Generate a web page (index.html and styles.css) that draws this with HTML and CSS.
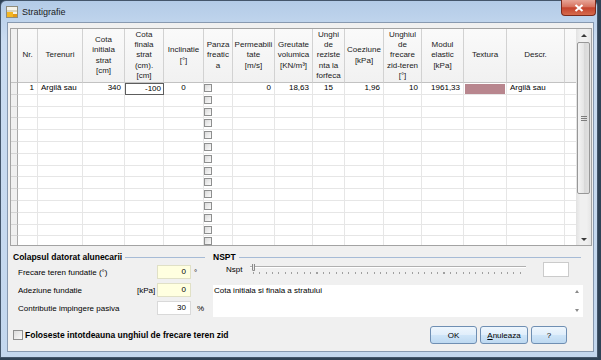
FILE: index.html
```html
<!DOCTYPE html>
<html lang="ro">
<head>
    <meta charset="UTF-8">
    <meta name="viewport" content="width=device-width, initial-scale=1.0">
    <title>Stratigrafie</title>
    <link rel="stylesheet" href="styles.css">
</head>
<body>
    <div class="window">
        <div class="titlebar">
            <svg class="app-icon" viewBox="0 0 12 12">
                <rect x="0.5" y="0.5" width="11" height="11" fill="#f6f3e8" stroke="#8f8c7c"/>
                <rect x="1" y="4" width="10" height="2" fill="#d9d3bd"/>
                <rect x="1" y="6" width="6" height="5" fill="#f3b623"/>
                <rect x="7" y="8" width="4" height="3" fill="#e49a16"/>
            </svg>
            <span class="title">Stratigrafie</span>
            <div class="close-btn">
                <svg width="10" height="8" viewBox="0 0 10 8">
                    <path d="M1.5 1 L8.5 7 M8.5 1 L1.5 7" stroke="#fff" stroke-width="2"/>
                </svg>
            </div>
        </div>

        <div class="client">
            <div class="grid-wrap">
                <div class="grid" id="grid">
                    <div class="hc corner"></div>
                    <div class="hc">Nr.</div>
                    <div class="hc">Terenuri</div>
                    <div class="hc">Cota<br>initiala<br>strat<br>[cm]</div>
                    <div class="hc">Cota<br>finala<br>strat<br>(cm).<br>[cm]</div>
                    <div class="hc">Inclinatie<br>[°]</div>
                    <div class="hc">Panza<br>freatic<br>a</div>
                    <div class="hc">Permeabili<br>tate<br>[m/s]</div>
                    <div class="hc">Greutate<br>volumica<br>[KN/m³]</div>
                    <div class="hc">Unghi<br>de<br>reziste<br>nta la<br>forfeca</div>
                    <div class="hc">Coeziune<br>[kPa]</div>
                    <div class="hc">Unghiul<br>de<br>frecare<br>zid-teren<br>[°]</div>
                    <div class="hc">Modul<br>elastic<br>[kPa]</div>
                    <div class="hc">Textura</div>
                    <div class="hc">Descr.</div>
                    <div class="hc filler"></div>

                    <div class="rh"></div>
                    <div class="c r">1</div>
                    <div class="c">Argilă sau</div>
                    <div class="c r">340</div>
                    <div class="c r sel">-100</div>
                    <div class="c m">0</div>
                    <div class="c cbcell"><span class="cb"></span></div>
                    <div class="c r">0</div>
                    <div class="c r">18,63</div>
                    <div class="c m">15</div>
                    <div class="c r">1,96</div>
                    <div class="c r">10</div>
                    <div class="c r">1961,33</div>
                    <div class="c tex"></div>
                    <div class="c">Argilă sau</div>
                    <div class="c filler"></div>
                    <!-- restul randurilor sunt adaugate din script -->
                </div>
                <div class="vscroll">
                    <div class="sb-btn"><span class="arrow-up"></span></div>
                    <div class="sb-track">
                        <div class="sb-thumb"><span class="grip"></span></div>
                    </div>
                    <div class="sb-btn"><span class="arrow-down"></span></div>
                </div>
            </div>

            <div class="panels">
                <div class="group group-left">
                    <div class="group-title">Colapsul datorat alunecarii</div>
                    <div class="fields">
                        <div class="field-row">
                            <span class="lbl">Frecare teren fundatie (°)</span>
                            <span class="pre"></span>
                            <span class="inp yellow">0</span>
                            <span class="post">°</span>
                        </div>
                        <div class="field-row">
                            <span class="lbl">Adeziune fundatie</span>
                            <span class="pre">[kPa]</span>
                            <span class="inp yellow">0</span>
                        </div>
                        <div class="field-row">
                            <span class="lbl">Contributie impingere pasiva</span>
                            <span class="pre"></span>
                            <span class="inp">30</span>
                            <span class="post pct">%</span>
                        </div>
                    </div>
                </div>

                <div class="group group-right">
                    <div class="group-title">NSPT</div>
                    <div class="nspt-row">
                        <span class="nspt-lbl">Nspt</span>
                        <div class="slider">
                            <div class="track"></div>
                            <div class="ticks"></div>
                            <div class="thumb"></div>
                        </div>
                        <span class="nspt-box"></span>
                    </div>
                    <div class="memo">
                        <div class="memo-text">Cota initiala si finala a stratului</div>
                        <div class="memo-sb">
                            <span class="arrow-up small"></span>
                            <span class="arrow-down small"></span>
                        </div>
                    </div>
                </div>
            </div>

            <div class="footer">
                <span class="chk"></span>
                <span class="chk-text">Foloseste intotdeauna unghiul de frecare teren zid</span>
                <div class="buttons">
                    <button class="btn btn-ok">OK</button>
                    <button class="btn btn-cancel"><u>A</u>nuleaza</button>
                    <button class="btn btn-help">?</button>
                </div>
            </div>
        </div>
    </div>

    <script>
        // randuri goale in grila (doar coloana "Panza freatica" are checkbox)
        const grid = document.getElementById('grid');
        for (let i = 0; i < 13; i++) {
            for (let c = 0; c < 16; c++) {
                const cell = document.createElement('div');
                if (c === 0) {
                    cell.className = 'rh';
                } else if (c === 15) {
                    cell.className = 'c filler';
                } else if (c === 6) {
                    cell.className = 'c cbcell';
                    cell.innerHTML = '<span class="cb"></span>';
                } else {
                    cell.className = 'c';
                }
                grid.appendChild(cell);
            }
        }
    </script>
</body>
</html>
```

FILE: styles.css
```css
* {
    box-sizing: border-box;
}
html, body {
    margin: 0;
    padding: 0;
}
body {
    width: 601px;
    height: 360px;
    overflow: hidden;
    background: #2f4256;
    font-family: "Liberation Sans", Arial, sans-serif;
    font-size: 8px;
    color: #000;
}
.window {
    width: 598px;
    height: 358px;
    border: 1px solid #44566b;
    border-radius: 6px 6px 0 0;
    background: linear-gradient(#b3cbe7, #cadcf1 40px, #c3d7ee);
}
.titlebar {
    height: 21px;
    display: flex;
    align-items: center;
}
.app-icon {
    width: 12px;
    height: 12px;
    margin-left: 5px;
}
.title {
    margin-left: 4px;
    font-size: 9px;
    color: #1b1b1b;
}
.close-btn {
    margin-left: auto;
    margin-right: 1px;
    margin-top: -1px;
    align-self: flex-start;
    width: 35px;
    height: 16px;
    border: 1px solid #7b2a1c;
    border-top: none;
    border-radius: 0 0 4px 4px;
    background: linear-gradient(#e8a597, #d7735f 45%, #c4432d 52%, #d66a4c);
    display: flex;
    align-items: center;
    justify-content: center;
}
.client {
    margin-left: 6px;
    width: 587px;
    height: 330px;
    border: 1px solid #8799b0;
    background: #f0f0f0;
    padding: 5px 0 0 2px;
}

/* grila */
.grid-wrap {
    width: 582px;
    height: 218px;
    border: 1px solid #a3a3a3;
    background: #fff;
    display: flex;
}
.grid {
    width: 565px;
    display: grid;
    grid-template-columns: 7px 20px 45px 42px 39px 40px 29px 42px 38px 32px 39px 38px 42px 43px 58px 11px;
    grid-template-rows: 54px;
    grid-auto-rows: 11.8px;
    align-content: start;
    overflow: hidden;
}
.hc {
    background: linear-gradient(#fafafa, #f1f1f1);
    border-right: 1px solid #d2d2d2;
    border-bottom: 1px solid #c2c2c2;
    display: flex;
    align-items: center;
    justify-content: center;
    text-align: center;
    line-height: 10.3px;
    color: #1a1a1a;
}
.hc.corner {
    background: #f0f0f0;
    border-right-color: #a9a9a9;
}
.c {
    border-right: 1px solid #e6e6e6;
    border-bottom: 1px solid #e6e6e6;
    line-height: 10.8px;
    padding: 0 3px;
    white-space: nowrap;
    overflow: hidden;
}
.rh {
    background: #f0f0f0;
    border-right: 1px solid #a9a9a9;
    border-bottom: 1px solid #d4d4d4;
}
.filler {
    border-right: none;
}
.r {
    text-align: right;
}
.m {
    text-align: center;
}
.sel {
    border: 1px solid #5d5d5d;
    padding-right: 2px;
}
.tex {
    padding: 1px 1px 0 1px;
    background: #b8868e;
    background-clip: content-box;
}
.cbcell {
    padding: 0;
}
.cb {
    display: block;
    width: 8px;
    height: 8px;
    margin: 1px 0 0 0;
    border: 1px solid #8e8f8f;
    background: linear-gradient(135deg, #dadada, #fbfbfb);
}

/* scrollbar */
.vscroll {
    width: 15px;
    background: linear-gradient(to right, #e2e2e2, #f0f0f0 30%, #f0f0f0 70%, #e6e6e6);
    display: flex;
    flex-direction: column;
}
.sb-btn {
    height: 12px;
    display: flex;
    align-items: center;
    justify-content: center;
}
.sb-track {
    flex: 1;
    padding: 1px;
}
.sb-thumb {
    height: 152px;
    border: 1px solid #979797;
    border-radius: 2px;
    background: linear-gradient(to right, #f4f4f4, #e6e6e6 50%, #d8d8d8 51%, #e0e0e0);
    display: flex;
    align-items: center;
    justify-content: center;
}
.grip {
    width: 6px;
    height: 5px;
    background: repeating-linear-gradient(#7d7d7d 0 1px, transparent 1px 2px);
}
.arrow-up {
    width: 0;
    height: 0;
    border-left: 3px solid transparent;
    border-right: 3px solid transparent;
    border-bottom: 3px solid #3a3a3a;
}
.arrow-down {
    width: 0;
    height: 0;
    border-left: 3px solid transparent;
    border-right: 3px solid transparent;
    border-top: 3px solid #3a3a3a;
}
.small {
    border-left-width: 2px;
    border-right-width: 2px;
    border-top-color: #8a8a8a;
    border-bottom-color: #8a8a8a;
}

/* panouri de jos */
.panels {
    display: flex;
    gap: 8px;
    margin-top: 6px;
    padding-left: 3px;
}
.group-left {
    width: 192px;
}
.group-right {
    width: 370px;
}
.group-title {
    height: 10px;
    display: flex;
    align-items: center;
    font-weight: bold;
    font-size: 8.5px;
    white-space: nowrap;
}
.group-title::after {
    content: "";
    flex: 1;
    height: 1px;
    margin-left: 3px;
    background: #a6bbd6;
}
.group-right .group-title::after {
    margin-right: 2px;
}
.fields {
    padding-top: 1px;
}
.field-row {
    height: 18px;
    display: flex;
    align-items: center;
}
.lbl {
    width: 119px;
    margin-left: 5px;
    white-space: nowrap;
}
.pre {
    width: 20px;
}
.inp {
    width: 34px;
    height: 14px;
    border: 1px solid #d9d9d9;
    background: #fff;
    text-align: right;
    padding-right: 4px;
    line-height: 12px;
}
.inp.yellow {
    background: #ffffe0;
    border-color: #e0e0c6;
}
.post {
    margin-left: 3px;
}
.post.pct {
    margin-left: 6px;
}
.nspt-row {
    height: 15px;
    display: flex;
    align-items: center;
}
.nspt-lbl {
    width: 24px;
    margin-left: 13px;
}
.slider {
    width: 276px;
    height: 15px;
    position: relative;
}
.track {
    position: absolute;
    left: 0;
    right: 0;
    top: 4px;
    height: 2px;
    border-top: 1px solid #b0b0b0;
    border-bottom: 1px solid #fff;
}
.ticks {
    position: absolute;
    left: 3px;
    right: 1px;
    top: 10px;
    height: 2px;
    background: repeating-linear-gradient(to right, #a0a0a0 0 1px, transparent 1px 6.35px);
}
.thumb {
    position: absolute;
    left: 2px;
    top: 2px;
    width: 3px;
    height: 7px;
    border: 1px solid #8a8a8a;
    border-top: none;
    border-radius: 0 0 2px 2px;
    background: #e9e9e9;
}
.nspt-box {
    width: 26px;
    height: 15px;
    margin-left: 17px;
    border: 1px solid #cbcbcb;
    background: #fff;
}
.memo {
    margin-top: 8px;
    height: 32px;
    background: #fff;
    display: flex;
}
.memo-text {
    flex: 1;
    padding: 1px 1px;
    line-height: 10px;
}
.memo-sb {
    width: 12px;
    display: flex;
    flex-direction: column;
    justify-content: space-between;
    align-items: center;
    padding: 5px 0 5px 0;
}

/* subsol */
.footer {
    margin-top: 9px;
    height: 18px;
    display: flex;
    align-items: center;
    padding-left: 3px;
    padding-right: 26px;
}
.chk {
    width: 10px;
    height: 10px;
    border: 1px solid #8e8f8f;
    background: linear-gradient(135deg, #dcdcdc, #fafafa);
}
.chk-text {
    margin-left: 2px;
    font-weight: bold;
    font-size: 8.5px;
}
.buttons {
    margin-left: auto;
    display: flex;
    gap: 3px;
}
.btn {
    height: 18px;
    padding: 0;
    font-family: "Liberation Sans", Arial, sans-serif;
    font-size: 8px;
    color: #000;
    border: 1px solid #6f8fb3;
    border-radius: 3px;
    background: linear-gradient(#eef6fd, #e0eefb 50%, #cfe5f8 51%, #bdd9f1);
}
.btn-ok {
    width: 47px;
}
.btn-cancel {
    width: 48px;
}
.btn-help {
    width: 36px;
}
```
